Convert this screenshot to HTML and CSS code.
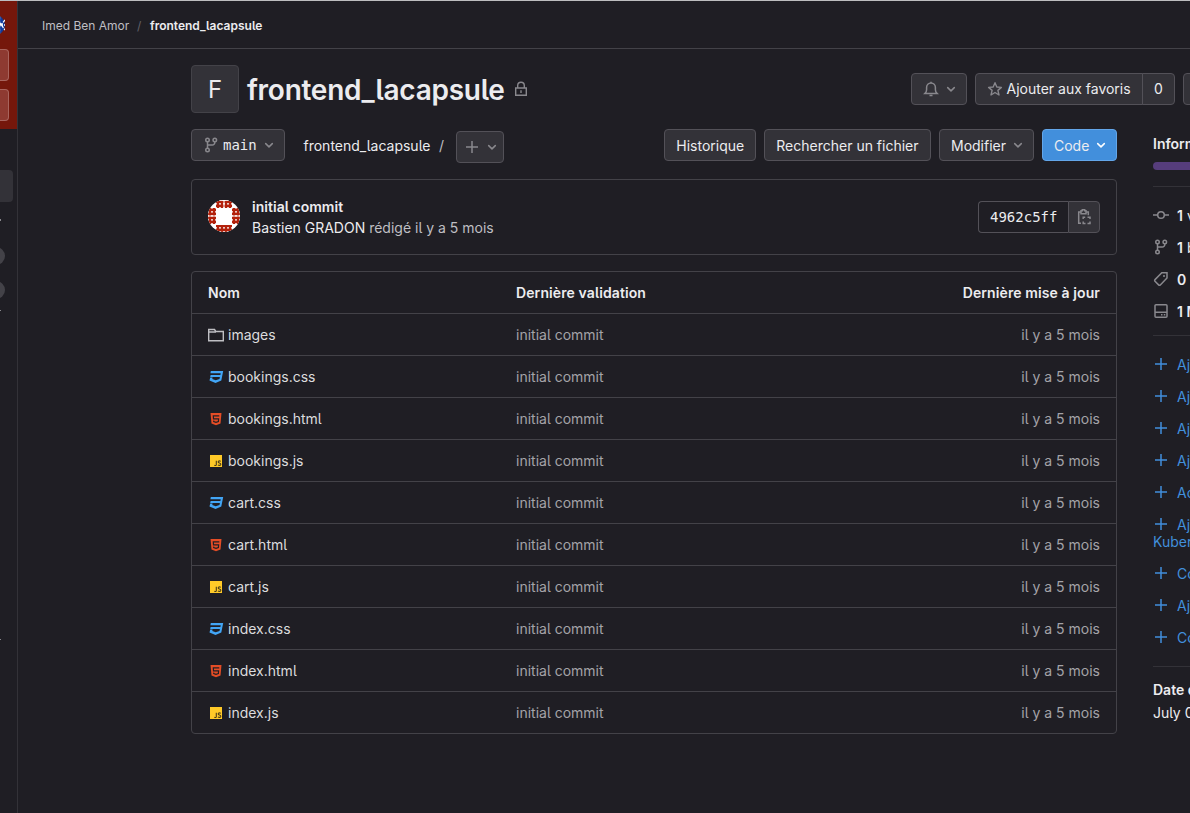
FILE: index.html
```html
<!DOCTYPE html>
<html lang="fr">
<head>
<meta charset="utf-8">
<title>frontend_lacapsule</title>
<link rel="stylesheet" href="styles.css">
</head>
<body>
<svg class="sprite" aria-hidden="true">
  <symbol id="chev" viewBox="0 0 16 16"><path d="M4.7 6.6 8 9.9l3.3-3.3" fill="none" stroke="currentColor" stroke-width="1.5" stroke-linecap="round" stroke-linejoin="round"/></symbol>
  <symbol id="plus" viewBox="0 0 16 16"><path d="M8 2v12M2 8h12" fill="none" stroke="currentColor" stroke-width="1.5"/></symbol>
  <symbol id="branch" viewBox="0 0 16 16"><g fill="none" stroke="currentColor" stroke-width="1.5"><circle cx="4.5" cy="3" r="1.75"/><circle cx="4.5" cy="13" r="1.75"/><circle cx="11.8" cy="3" r="1.75"/><path d="M4.5 4.75v6.5M11.8 4.75v.75a2.5 2.5 0 0 1-2.500 2.500H4.500"/></g></symbol>
  <symbol id="lock" viewBox="0 0 16 16"><g fill="none" stroke="currentColor" stroke-width="1.4"><path d="M2.700 7h10.600v7.300H2.700zM4.700 7V4.500a3.300 3.300 0 0 1 6.600 0V7M8 9.200v2.800"/></g></symbol>
  <symbol id="bell" viewBox="0 0 16 16"><path d="M2 12.400h12c-1-.9-1.600-2-1.600-3.600V6.500a4.400 4.400 0 0 0-8.800 0v2.300c0 1.600-.6 2.700-1.600 3.600zM8 .8v1.300M6.500 14.500h3" fill="none" stroke="currentColor" stroke-width="1.500"/></symbol>
  <symbol id="star" viewBox="0 0 16 16"><path d="m8 1.700 1.800 4.300 4.600.4-3.500 3 1.100 4.600L8 11.500 4 14l1.100-4.600-3.500-3L6.200 6z" fill="none" stroke="currentColor" stroke-width="1.400" stroke-linejoin="round"/></symbol>
  <symbol id="commit" viewBox="0 0 16 16"><g fill="none" stroke="currentColor" stroke-width="1.500"><circle cx="8" cy="8" r="3.300"/><path d="M0 8h4.700M11.300 8H16"/></g></symbol>
  <symbol id="tag" viewBox="0 0 16 16"><path d="M8.800 1.800 14 1.700v5.200L7.300 13.900a1.200 1.200 0 0 1-1.700 0L2 10.300a1.200 1.200 0 0 1 0-1.700z" fill="none" stroke="currentColor" stroke-width="1.500"/><circle cx="11" cy="4.900" r="1" fill="currentColor"/></symbol>
  <symbol id="disk" viewBox="0 0 16 16"><path d="M3 1.800h10a1 1 0 0 1 1 1v10.400a1 1 0 0 1-1 1H3a1 1 0 0 1-1-1V2.800a1 1 0 0 1 1-1zM2 9.300h12" fill="none" stroke="currentColor" stroke-width="1.500"/><path d="M8 11h1.500v1.500H8zM10.800 11h1.500v1.500h-1.500z" fill="currentColor"/></symbol>
  <symbol id="copy" viewBox="0 0 16 16"><g fill="none" stroke="currentColor" stroke-width="1.500"><path d="M5 14.200H2.700V3H5M10 3h2.300v3.200"/><path d="M5 1.800h1.300V.8h2.400v1H10v3H5z"/><path d="M7.200 10V8.200h2M11.500 8.200H14V10M14 12.500v2h-2.500M9.500 14.500H7.200v-2"/></g></symbol>
  <symbol id="folder" viewBox="0 0 16 16"><path d="M.7 13.800V2.500h5.800l1.300 2h7.500v9.300zM1 5h7" fill="none" stroke="currentColor" stroke-width="1.400"/></symbol>
  <symbol id="css" viewBox="0 0 16 16"><path d="M2.800 2h12.400l-1.900 9.600L7.500 14l-6-2.400.7-3.100h2.400l-.3 1.400 3.400 1.300 3.800-1.300.4-1.900H2.200l.4-2.100h9.800l.3-1.700H2.400z" fill="#42a5f5"/></symbol>
  <symbol id="html" viewBox="0 0 16 16"><path d="m2.500 2 1 10.500L8 14.200l4.500-1.700 1-10.500z" fill="#e44d26"/><path d="M11.300 4.900H5.300l.2 3h5.100l-.2 2.700-2.400.8-2.300-.8-.1-1" fill="none" stroke="#1f1e24" stroke-width="1.200"/></symbol>
  <symbol id="js" viewBox="0 0 16 16"><path d="M2 2h12v12H2z" fill="#ffca28"/><path d="M8.300 7.800v4q0 1.200-2 .5M12.800 8.200q-2.600-.8-2.600.7c0 1.300 2.600.9 2.600 2.300 0 1.500-1.900 1.300-2.900.8" fill="none" stroke="#4b3d17" stroke-width="1.100"/></symbol>
</svg>
<div class="app">
  <nav class="rail">
    <div class="rail-top">
      <svg class="globe" viewBox="0 0 20 20"><circle cx="10" cy="10" r="10" fill="#103b9d"/><path d="M14.500 1.500v17M11 10h9M12 4l8 11M20 5l-8 10" stroke="#fff" stroke-width="1.300" stroke-dasharray="3 1" fill="none"/></svg>
      <span class="rail-btn"></span><span class="rail-btn"></span>
    </div>
    <div class="rail-active"></div>
    <i class="tick"></i>
    <div class="pill first"></div>
    <div class="pill"></div>
    <i class="tick second"></i>
    <i class="tick third"></i>
  </nav>
  <div class="page">
    <header class="crumbs"><span class="owner">Imed Ben Amor</span><span class="sep">/</span><b class="here">frontend_lacapsule</b></header>
    <div class="content">
      <div class="project">
        <div class="letter">F</div>
        <h1><span>frontend_lacapsule</span></h1>
        <svg class="ic lock"><use href="#lock"/></svg>
        <div class="actions">
          <button class="btn notify"><svg class="ic"><use href="#bell"/></svg><svg class="ic"><use href="#chev"/></svg></button>
          <div class="group"><button class="btn fav"><svg class="ic"><use href="#star"/></svg><span>Ajouter aux favoris</span></button><span class="btn count">0</span></div>
          <button class="btn fork"></button>
        </div>
      </div>
      <div class="columns">
        <main>
          <div class="tools">
            <button class="btn ref"><svg class="ic"><use href="#branch"/></svg><code>main</code><svg class="ic"><use href="#chev"/></svg></button>
            <span class="path">frontend_lacapsule</span><span class="slash">/</span>
            <button class="btn add"><svg class="ic"><use href="#plus"/></svg><svg class="ic"><use href="#chev"/></svg></button>
            <div class="right">
              <button class="btn hist"><span>Historique</span></button>
              <button class="btn find"><span>Rechercher un fichier</span></button>
              <button class="btn edit"><span>Modifier</span><svg class="ic"><use href="#chev"/></svg></button>
              <button class="btn code"><span>Code</span><svg class="ic"><use href="#chev"/></svg></button>
            </div>
          </div>
          <section class="commit">
            <svg class="avatar" viewBox="0 0 32 32">
              <defs><clipPath id="round"><circle cx="16" cy="16" r="16"/></clipPath>
              <pattern id="weave" width="4" height="4" patternUnits="userSpaceOnUse"><path fill="#fff" d="M0 0h4v4H0z"/><path fill="#b3210b" d="M1 0h2v.6h1v2.600H3V4H1v-.8H0V.6h1z"/></pattern></defs>
              <g clip-path="url(#round)"><path fill="#fff" d="M0 0h32v32H0z"/><path fill="url(#weave)" d="M8 0h16v8H8zM0 8h8v16H0zM24 8h8v16h-8zM8 25h16v7H8z"/><path fill="#fff" d="M15.500 0h1v8h-1zM0 15.500h8v1H0zM24 15.500h8v1h-8zM8 0h16v1H8z"/></g>
            </svg>
            <div class="message"><strong>initial commit</strong><p><span class="author">Bastien GRADON</span> <span class="when">rédigé il y a 5 mois</span></p></div>
            <div class="group sha"><code>4962c5ff</code><button class="btn copy"><svg class="ic"><use href="#copy"/></svg></button></div>
          </section>
          <table>
            <thead><tr><th class="name">Nom</th><th class="last">Dernière validation</th><th class="date">Dernière mise à jour</th></tr></thead>
            <tbody>
              <tr><td><svg class="ic fold"><use href="#folder"/></svg>images</td><td>initial commit</td><td>il y a 5 mois</td></tr>
              <tr><td><svg class="ic"><use href="#css"/></svg>bookings.css</td><td>initial commit</td><td>il y a 5 mois</td></tr>
              <tr><td><svg class="ic"><use href="#html"/></svg>bookings.html</td><td>initial commit</td><td>il y a 5 mois</td></tr>
              <tr><td><svg class="ic"><use href="#js"/></svg>bookings.js</td><td>initial commit</td><td>il y a 5 mois</td></tr>
              <tr><td><svg class="ic"><use href="#css"/></svg>cart.css</td><td>initial commit</td><td>il y a 5 mois</td></tr>
              <tr><td><svg class="ic"><use href="#html"/></svg>cart.html</td><td>initial commit</td><td>il y a 5 mois</td></tr>
              <tr><td><svg class="ic"><use href="#js"/></svg>cart.js</td><td>initial commit</td><td>il y a 5 mois</td></tr>
              <tr><td><svg class="ic"><use href="#css"/></svg>index.css</td><td>initial commit</td><td>il y a 5 mois</td></tr>
              <tr><td><svg class="ic"><use href="#html"/></svg>index.html</td><td>initial commit</td><td>il y a 5 mois</td></tr>
              <tr><td><svg class="ic"><use href="#js"/></svg>index.js</td><td>initial commit</td><td>il y a 5 mois</td></tr>
            </tbody>
          </table>
        </main>
        <aside>
          <h2>Informations</h2>
          <div class="langs"></div>
          <ul class="stats">
            <li><svg class="ic"><use href="#commit"/></svg><b>1</b> validation</li>
            <li><svg class="ic"><use href="#branch"/></svg><b>1</b> branche</li>
            <li><svg class="ic"><use href="#tag"/></svg><b>0</b> étiquette</li>
            <li><svg class="ic"><use href="#disk"/></svg><b>1 Mio</b></li>
          </ul>
          <ul class="links">
            <li><svg class="ic"><use href="#plus"/></svg>Ajouter</li>
            <li><svg class="ic"><use href="#plus"/></svg>Ajouter</li>
            <li><svg class="ic"><use href="#plus"/></svg>Ajouter</li>
            <li><svg class="ic"><use href="#plus"/></svg>Ajouter</li>
            <li><svg class="ic"><use href="#plus"/></svg>Activer</li>
            <li class="two"><svg class="ic"><use href="#plus"/></svg>Ajouter<br>Kubernetes</li>
            <li><svg class="ic"><use href="#plus"/></svg>Configurer</li>
            <li><svg class="ic"><use href="#plus"/></svg>Ajouter</li>
            <li><svg class="ic"><use href="#plus"/></svg>Configurer</li>
          </ul>
          <div class="created"><b>Date de création</b><p>July 02</p></div>
        </aside>
      </div>
    </div>
  </div>
</div>
</body>
</html>
```
FILE: styles.css
```css
* { box-sizing: border-box; }
html, body { margin: 0; height: 100%; overflow: hidden; }
body { background: #1f1e24; color: #ececef; font: 14px/20px Inter, "Liberation Sans", sans-serif; font-feature-settings: "cv05", "cv08" 0; }
ul, p, h1, h2 { margin: 0; padding: 0; list-style: none; }
button { font: inherit; font-feature-settings: inherit; color: inherit; }
code { font: 14px/20px "DejaVu Sans Mono", monospace; }
.sprite { display: none; }
.ic { width: 16px; height: 16px; flex: none; color: #89888d; }
.app { display: flex; height: 813px; border-top: 1px solid #bdbdbf; overflow: hidden; }
.rail { flex: none; width: 18px; border-right: 1px solid #333238; overflow: hidden; }
.rail-top { height: 128px; background: #75170b; display: flex; flex-direction: column; align-items: flex-start; }
.globe { width: 20px; height: 20px; margin: 14px 0 14px -15px; flex: none; }
.rail-btn { width: 9px; height: 32px; margin-bottom: 8px; background: #8e3a31; border: 1px solid #a8645d; border-left: 0; border-radius: 0 4px 4px 0; flex: none; }
.rail-active { width: 13px; height: 32px; margin-top: 41px; background: #333238; border-radius: 0 4px 4px 0; }
.tick { display: block; width: 1px; height: 2px; background: #89888d; margin-top: 17px; }
.pill { width: 20px; height: 18px; margin: 16px 0 0 -15px; border-radius: 9px; background: #434248; }
.pill.first { margin-top: 26px; }
.tick.second { margin-top: 11px; height: 1px; }
.tick.third { margin-top: 328px; height: 1px; }
.page { flex: 1; min-width: 0; overflow: hidden; }
.crumbs { height: 48px; border-bottom: 1px solid #434248; padding: 3px 24px 0; display: flex; align-items: center; font-size: 12px; white-space: nowrap; }
.owner { color: #bfbfc3; width: 95px; }
.sep { color: #626168; width: 13px; }
.here { font-weight: 600; }
.content { margin-left: 173px; padding-top: 16px; }
.project { display: flex; height: 48px; align-items: center; }
.letter { width: 48px; height: 48px; padding-top: 1px; border: 1px solid #434248; border-radius: 4px; background: #333238; display: grid; place-items: center; font-size: 24px; }
h1 { margin-left: 8px; width: 266px; padding-top: 2px; font-size: 28px; line-height: 36px; font-weight: 600; letter-spacing: -.26px; white-space: nowrap; }
.actions { margin-left: auto; width: 279px; display: flex; gap: 8px; flex: none; }
.btn { display: flex; align-items: center; height: 32px; padding: 0 11px; margin: 0; background: #333238; border: 1px solid #535158; border-radius: 4px; white-space: nowrap; flex: none; }
.notify { width: 56px; gap: 4px; }
.group { display: flex; flex: none; }
.fav { width: 168px; gap: 3.5px; border-radius: 4px 0 0 4px; }
.count { width: 33px; margin-left: -1px; border-radius: 0 4px 4px 0; justify-content: center; }
.fork { width: 70px; }
.columns { display: flex; gap: 36px; }
main { width: 926px; flex: none; padding-top: 16px; }
.tools { display: flex; height: 34px; align-items: flex-start; }
.ref { width: 94px; }
.ref code { width: 36px; margin: 0 4px; }
.path { margin: 7px 0 0 18.5px; width: 135.5px; white-space: nowrap; }
.slash { margin-top: 7px; width: 17px; color: #bfbfc3; }
.add { width: 48px; margin-top: 2px; padding: 0 7px; gap: 4px; }
.right { display: flex; gap: 8px; margin-left: auto; }
.right span { padding-top: 2px; }
.hist, .find { padding: 0 11.3px; }
.hist { width: 92px; }
.find { width: 167px; }
.edit { width: 95px; justify-content: space-between; padding-right: 7px; }
.code { width: 75px; justify-content: space-between; padding-right: 7px; background: #428fdc; border-color: #63a6e9; }
.code .ic { color: #fff; }
.commit { height: 76px; margin: 16px 0; border: 1px solid #434248; border-radius: 4px; padding: 0 16px; display: flex; align-items: center; }
.avatar { width: 32px; height: 32px; margin-top: -2px; }
.message { margin-left: 12px; line-height: 21px; }
.message strong { font-weight: 600; letter-spacing: .03px; }
.when { color: #bfbfc3; }
.sha { margin-left: auto; }
.sha code { width: 90px; height: 32px; line-height: 30px; padding-left: 11px; border: 1px solid #535158; border-right: 0; border-radius: 4px 0 0 4px; }
.copy { width: 32px; padding: 0 7px; border-radius: 0 4px 4px 0; }
table { width: 926px; table-layout: fixed; border: 1px solid #434248; border-radius: 4px; border-collapse: separate; border-spacing: 0; }
th { height: 41px; font-weight: 600; letter-spacing: .1px; text-align: left; padding: 0 16px; }
td { height: 42px; border-top: 1px solid #434248; padding: 0 16px; color: #a4a3a8; }
td:first-child { color: #dcdcde; }
td .ic { margin-right: 4px; vertical-align: -3px; }
td .fold { color: #bfbfc3; }
.name { width: 308px; }
.last { width: 308px; }
th:last-child, td:last-child { text-align: right; }
aside { flex: none; width: 290px; padding-top: 21px; white-space: nowrap; }
h2 { font-size: 14px; line-height: 20px; font-weight: 600; }
.langs { height: 8px; border-radius: 4px; background: #563d7c; margin: 8px 0 16px; }
.stats { border-top: 1px solid #333238; padding-top: 13px; height: 149px; }
.stats li { height: 32px; display: flex; align-items: center; gap: 4px; }
.stats .ic { margin: -2px 4px 0 0; }
.stats b { font-weight: 600; }
.links { border-top: 1px solid #333238; border-bottom: 1px solid #333238; padding-top: 13px; height: 332px; color: #428fdc; }
.links li { height: 32px; padding-top: 6px; line-height: 20px; }
.links .ic { color: #428fdc; margin-right: 8px; vertical-align: -2px; }
.links .two { height: 49px; line-height: 17px; padding-top: 7px; }
.created { padding-top: 11px; line-height: 23px; }
.created b { font-weight: 600; }
```
